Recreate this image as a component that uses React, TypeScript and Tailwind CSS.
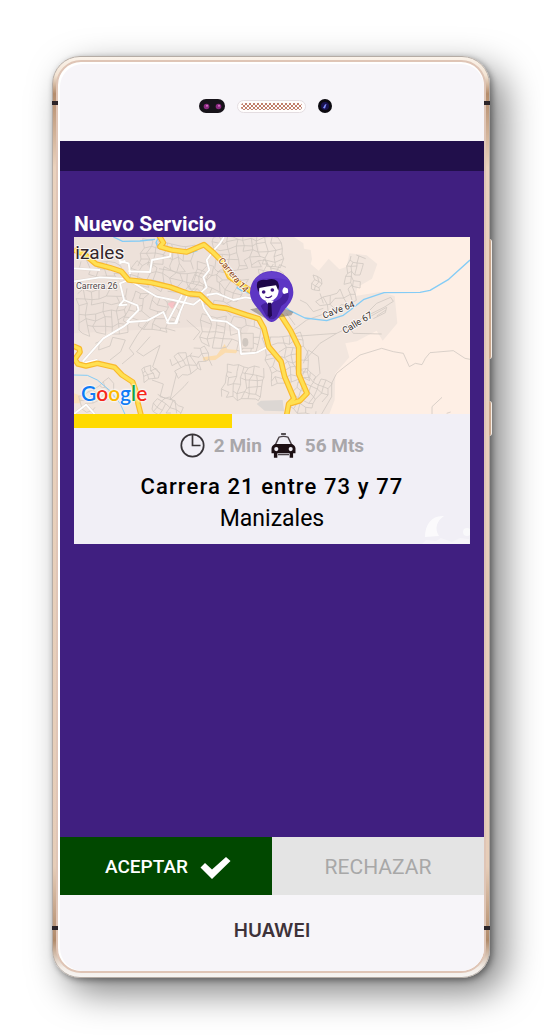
import React from 'react';

type Cluster = { x: number; y: number; cols: number; rows: number; w: number; h: number; angle: number; seed: number };

const CLUSTERS: Cluster[] = [
  { x: 250, y: 120, cols: 7, rows: 4, w: 22, h: 20, angle: 8, seed: 3 },
  { x: 460, y: 112, cols: 9, rows: 6, w: 22, h: 18, angle: -6, seed: 7 },
  { x: 50, y: 275, cols: 6, rows: 6, w: 24, h: 22, angle: -4, seed: 11 },
  { x: 60, y: 180, cols: 5, rows: 2, w: 26, h: 22, angle: 6, seed: 12 },
  { x: 225, y: 185, cols: 9, rows: 3, w: 24, h: 22, angle: 12, seed: 15 },
  { x: 220, y: 270, cols: 7, rows: 5, w: 22, h: 20, angle: 16, seed: 19 },
  { x: 420, y: 180, cols: 7, rows: 5, w: 22, h: 22, angle: 24, seed: 23 },
  { x: 430, y: 345, cols: 8, rows: 4, w: 22, h: 22, angle: 7, seed: 27 },
  { x: 330, y: 475, cols: 7, rows: 3, w: 16, h: 20, angle: -20, seed: 31 },
  { x: 500, y: 490, cols: 7, rows: 5, w: 16, h: 20, angle: 8, seed: 37 },
  { x: 240, y: 505, cols: 3, rows: 3, w: 16, h: 14, angle: -18, seed: 41 },
  { x: 50, y: 590, cols: 6, rows: 3, w: 19, h: 18, angle: -28, seed: 43 },
  { x: 300, y: 580, cols: 5, rows: 3, w: 16, h: 18, angle: 32, seed: 47 },
  { x: 610, y: 420, cols: 6, rows: 7, w: 20, h: 20, angle: -10, seed: 53 },
  { x: 735, y: 510, cols: 5, rows: 6, w: 18, h: 20, angle: 26, seed: 59 },
  { x: 610, y: 175, cols: 4, rows: 3, w: 17, h: 16, angle: 22, seed: 61 },
  { x: 870, y: 165, cols: 3, rows: 5, w: 15, h: 17, angle: 12, seed: 67 },
  { x: 762, y: 230, cols: 2, rows: 3, w: 14, h: 12, angle: 16, seed: 71 },
  { x: 770, y: 300, cols: 6, rows: 2, w: 19, h: 22, angle: -22, seed: 73 },
];

function clusterPath(c: Cluster): string {
  let s = c.seed;
  const rand = () => {
    s = (s * 9301 + 49297) % 233280;
    return s / 233280;
  };
  const a = (c.angle * Math.PI) / 180;
  const pts: number[][][] = [];
  for (let r = 0; r <= c.rows; r++) {
    pts.push([]);
    for (let k = 0; k <= c.cols; k++) {
      const u = k * c.w + (rand() - 0.5) * c.w * 0.7;
      const v = r * c.h + (rand() - 0.5) * c.h * 0.7;
      pts[r].push([Math.round(c.x + u * Math.cos(a) - v * Math.sin(a)), Math.round(c.y + u * Math.sin(a) + v * Math.cos(a))]);
    }
  }
  let d = '';
  for (let r = 0; r <= c.rows; r++) {
    for (let k = 0; k <= c.cols; k++) {
      const p = pts[r][k];
      if (k < c.cols && rand() > 0.15) d += `M${p[0]} ${p[1]}L${pts[r][k + 1][0]} ${pts[r][k + 1][1]}`;
      if (r < c.rows && rand() > 0.15) d += `M${p[0]} ${p[1]}L${pts[r + 1][k][0]} ${pts[r + 1][k][1]}`;
    }
  }
  return d;
}

const HIGHWAYS = [
  'M42 150 L72 162 L108 192 L150 203 L184 214 L206 240 L270 247 L330 261 L385 281 L420 284 L456 319 L500 325 L560 345 L596 356 L612 385 L626 440 L663 484 L674 530 L702 596 L686 612 L680 645',
  'M296 105 L310 128 L300 140 L335 150 L380 156 L432 134 L458 156 L488 186 L508 230 L556 262 L610 300 L665 350 L692 392 L716 442 L716 522 L741 580 L720 602 L690 611',
  'M40 438 L58 446 L60 456 L44 478 L54 492 L78 498 L112 490 L164 502 L186 525 L218 546 L230 580 L234 610 L243 645',
];

const WHITE_ROADS =
  'M42 205 L120 210 M42 244 L120 232 L190 236 M176 182 L206 190 L210 222 M206 240 L180 250 L192 300 L178 316 L202 314 M178 190 L196 182 M206 240 L290 290 L340 300 L400 314 L424 296 M205 214 L270 216 L276 180 L330 170 L332 150 M382 285 L345 370 M366 285 L320 370 M420 285 L432 325 L455 360 L500 365 L536 390 L543 462 L590 458 L625 440 M420 280 L440 262 L430 232 L448 210 L440 180 L462 150 L480 130 L492 112 M440 285 L470 280 L520 300 L556 292 L580 296 M68 485 L130 415 L190 380 L208 366 L262 362 L310 336 L325 370 L350 370 L362 330 M192 300 L232 316 L236 330 L200 366 M60 492 L110 480 L122 492 M42 642 L78 614 L104 642';

const URBAN =
  'M42 111 H702 L730 130 L732 146 L752 150 L756 178 L752 192 L776 212 L806 176 L838 208 L860 200 L868 160 L920 166 L952 192 L936 236 L892 262 L886 288 L960 276 L1004 288 L1012 370 L968 422 L950 392 L890 424 L856 430 L868 472 L826 520 L824 600 L808 642 H42 Z';

function CityMap() {
  return (
    <svg viewBox="42 111 1188 531" className="block h-auto w-full" role="img" aria-label="Mapa de Manizales">
      <rect x="42" y="111" width="1188" height="531" fill="#feefe5" />
      <path d={URBAN} fill="#f2e6de" />
      <path d="M42 111 H590 L620 260 L560 400 L420 380 L42 400 Z" fill="#ede1da" />
      <path d="M322 312 L338 300 L354 312 L336 326 Z" fill="#f8c2c6" />
      <path d="M428 472 L470 466 L494 432 L502 448 L534 450 L528 460 L496 458 L466 480 L430 482 Z" fill="#fbdcae" />
      <path d="M42 580 L70 590 L60 610 L42 610 Z" fill="#fbe0b8" />

      <g fill="none" stroke="#cfc7c0" strokeWidth="2.3">
        {CLUSTERS.map((c) => (
          <path key={c.seed} d={clusterPath(c)} />
        ))}
        <path d="M106 430 L118 425 L116 450 L150 438 L158 412 L196 420 L182 455 L150 480 M262 365 L232 405 L208 445 L222 462 L186 492 M270 410 L230 455 L250 468 L300 436 L278 500 L300 520 M276 540 L310 552 L300 590 L345 602 L350 640 M380 360 L420 395 L400 420 M350 520 L330 600 L372 560 L385 545" />
        <path d="M735 480 L780 430 L830 400 M700 390 L740 360 L840 325 M780 280 L790 310 M720 300 L740 310 L760 335 L790 325 M680 340 L705 375 M690 410 L830 400 L875 378 M860 372 L880 400 L965 402 M730 490 L745 450 L775 470 L780 520 L760 540" />
        <path d="M900 360 L950 310 L992 292 L1000 304 L972 322 L924 346 M930 350 L980 322 L976 338 L940 356 M950 348 L978 330" />
        <path d="M785 642 L815 590 L815 550 L830 520 L852 502 L900 465 L965 445 L1000 455 L1030 460 L1048 500 L1066 490 L1086 494 L1096 475 L1110 458 L1180 452 L1215 475 L1230 478" />
        <path d="M1116 642 L1116 620 L1146 592 M1160 640 L1172 636" />
      </g>
      <path d="M590 612 L602 602 L668 600 L672 634 L614 632 Z" fill="#dcd7d3" />
      <path d="M543 400 H580 V445 H543 Z" fill="#eee2da" stroke="#cfc7c0" strokeWidth="2" />
      <ellipse cx="556" cy="427" rx="9" ry="13" fill="#cfc7c0" />

      <path d={WHITE_ROADS} fill="none" stroke="#dfd5ce" strokeWidth="8" strokeLinejoin="round" />
      <path d={WHITE_ROADS} fill="none" stroke="#ffffff" strokeWidth="5.5" strokeLinejoin="round" />

      <g fill="none" stroke="#84ccf6" strokeWidth="4" strokeLinejoin="round">
        <path d="M160 111 L188 124 L240 123 L285 118 M294 115 L288 128 L295 142 M385 160 L412 152 M530 262 L548 274 L570 280" />
        <path d="M660 310 L690 332 L735 354 L800 362 L850 346 L876 326 L912 298 L972 278 L1080 277 L1110 271 L1166 238 L1230 180" />
        <path d="M42 525 L82 526 L112 540 L150 572 L180 610 L196 645" strokeWidth="3" />
      </g>

      {HIGHWAYS.map((d) => (
        <path key={d} d={d} fill="none" stroke="#f9b92c" strokeWidth="17" strokeLinejoin="round" />
      ))}
      {HIGHWAYS.map((d) => (
        <path key={d} d={d} fill="none" stroke="#ffe052" strokeWidth="10" strokeLinejoin="round" />
      ))}

      <g fontFamily="Roboto, sans-serif" stroke="#ffffff" strokeWidth="6" strokeOpacity="0.75" paintOrder="stroke" strokeLinejoin="round">
        <text x="46" y="178" fontSize="57" fill="#33262a">izales</text>
        <text x="48" y="267" fontSize="27" fill="#54494a">Carrera 26</text>
        <text x="474" y="182" fontSize="27" fill="#8a4318" transform="rotate(51 474 182)">Carrera 14</text>
        <text x="792" y="356" fontSize="27" fill="#3c3431" transform="rotate(-21 792 356)">CaVe 64</text>
        <text x="854" y="402" fontSize="28" fill="#3c3431" transform="rotate(-31 854 402)">Calle 67</text>
      </g>

      <path d="M570 328 L600 322 L635 362 L610 352 Z M635 362 L665 322 L700 336 L694 346 L660 352 Z" fill="#6d6560" opacity="0.5" />
      <path d="M635 366 C622 366 612 350 600 334 C584 314 570 300 570 277 A65 64 0 0 1 700 277 C700 300 686 314 670 334 C658 350 648 366 635 366 Z" fill="#5d36c4" />
      <path d="M580 246 A62 56 0 0 1 690 246 C676 230 594 230 580 246 Z" fill="#6640cc" />
      <path d="M602 318 Q612 306 634 306 Q664 302 670 280 L686 280 Q690 304 664 318 L650 350 Q635 366 620 350 Z" fill="#45219c" />
      <path d="M616 302 L628 318 L642 302 Z" fill="#ffffff" />
      <path d="M624 308 L634 308 L636 346 L629 354 L623 346 Z" fill="#200750" />
      <path d="M597 258 L652 252 Q660 270 652 288 Q642 304 624 304 Q604 302 598 282 Z" fill="#ffffff" />
      <path d="M592 247 Q600 236 620 240 Q640 232 652 244 Q660 256 655 272 L648 256 Q620 260 598 264 L596 276 Q588 262 592 247 Z" fill="#1e0748" />
      <circle cx="611" cy="276" r="5.5" fill="#38107c" />
      <circle cx="637" cy="270" r="5.5" fill="#38107c" />
      <path d="M616 290 Q627 297 636 287" fill="none" stroke="#38107c" strokeWidth="3.5" />
      <path d="M669 266 Q672 258 679 264 Q686 264 684 278 L672 282 Q664 275 669 266 Z" fill="#ffffff" />
    </svg>
  );
}

function PhoneSensors() {
  return (
    <div className="flex items-center justify-center gap-3 pr-[14px]" aria-hidden="true">
      <svg viewBox="0 0 26 14" className="h-[14px] w-[26px]">
        <rect width="26" height="14" rx="7" fill="#17131a" />
        <circle cx="7.5" cy="7.5" r="2.8" fill="#8a2a80" />
        <circle cx="19.5" cy="7.5" r="2.8" fill="#8a2a80" />
        <circle cx="8" cy="6.7" r="1" fill="#d878c8" />
        <circle cx="20" cy="6.7" r="1" fill="#d878c8" />
      </svg>
      <svg viewBox="0 0 69 13" className="h-[13px] w-[69px]">
        <defs>
          <pattern id="grille" x="4" y="3" width="4" height="4" patternUnits="userSpaceOnUse">
            <circle cx="1" cy="1" r="0.95" fill="#a5482c" />
            <circle cx="3" cy="3" r="0.95" fill="#a5482c" />
          </pattern>
        </defs>
        <rect x="0.5" y="0.5" width="68" height="12" rx="6" fill="#fffdfd" stroke="#e4dde1" />
        <rect x="4" y="3" width="61" height="7" rx="3" fill="url(#grille)" />
      </svg>
      <svg viewBox="0 0 14 14" className="size-[14px]">
        <circle cx="7" cy="7" r="7" fill="#0c0a10" />
        <circle cx="7" cy="7" r="4" fill="#19124e" />
        <path d="M5 9 L7 5.5 L8.5 5 L7 9.5 Z" fill="#8090ff" />
      </svg>
    </div>
  );
}

function ClockIcon() {
  return (
    <svg viewBox="0 0 25 25" className="size-[25px]" fill="none" stroke="#383438" aria-hidden="true">
      <circle cx="12.5" cy="12.5" r="11.2" strokeWidth="1.7" />
      <path d="M12.5 2 V12.5 H20.5" strokeWidth="1.7" />
    </svg>
  );
}

function TaxiIcon() {
  return (
    <svg viewBox="632 81 72 73" className="size-[25px]" aria-hidden="true">
      <path d="M661 81 H675 V87 H661 Z" fill="#555054" />
      <path d="M643 118 L655 93 Q668 89 681 93 L693 118" fill="none" stroke="#4b4348" strokeWidth="4" strokeLinejoin="round" />
      <path d="M643 113 H693 Q703 118 703 126 V140 H633 V126 Q633 118 643 113 Z" fill="#1d1014" />
      <circle cx="647" cy="128" r="6" fill="#f1eff6" />
      <circle cx="689" cy="128" r="6" fill="#f1eff6" />
      <path d="M640 139 H650 V153 H640 Z M686 139 H696 V153 H686 Z" fill="#1d1014" />
      <path d="M652 144 H684" stroke="#4b4348" strokeWidth="4" />
    </svg>
  );
}

function FrameSeams() {
  return (
    <>
      <span className="absolute top-[44px] -left-px h-1 w-[6px] bg-[#2c2529]" />
      <span className="absolute top-[44px] -right-px h-1 w-[6px] bg-[#2c2529]" />
      <span className="absolute bottom-[47px] -left-px h-1 w-[6px] bg-[#2c2529]" />
      <span className="absolute -right-px bottom-[47px] h-1 w-[6px] bg-[#2c2529]" />
      <span className="absolute top-[182px] -right-[3px] h-[120px] w-[3px] rounded-r-sm border-r border-[#f5efe9] bg-[#c9a68b]" />
      <span className="absolute top-[344px] -right-[3px] h-[35px] w-[3px] rounded-r-sm border-r border-[#f5efe9] bg-[#c9a68b]" />
    </>
  );
}

export default function App() {
  return (
    <div className="flex min-h-screen flex-col bg-white pt-14 pr-[54px] pb-[57px] pl-[52px] font-[Roboto,sans-serif]">
      <div className="relative flex flex-1 flex-col rounded-[28px] border border-[#b5aca5] bg-[linear-gradient(180deg,#fbf3ea_0%,#f3e4d4_2%,#b48c6c_4%,#ead2bd_12%,#e6cdb8_88%,#b08a6a_96%,#f4eee9_99%,#f6f4f2_100%)] pt-[3px] pr-[3px] pb-[4px] pl-[3px] shadow-[2px_2px_6px_rgba(0,0,0,0.4),14px_14px_36px_rgba(0,0,0,0.5)]">
        <FrameSeams />
        <div className="flex flex-1 flex-col rounded-[25px] border-2 border-[#dfc5b6] bg-white pt-[2px] pl-[2px]">
          <div className="flex flex-1 flex-col rounded-[23px] bg-[#f7f5f9]">
            <div className="flex h-[77px] flex-col justify-center pt-[7px]">
              <PhoneSensors />
            </div>

            <main className="flex flex-1 flex-col bg-[#401f80]">
              <div className="h-[30px] bg-[#210f4b]" />
              <div className="flex-1 px-[14px] pt-10">
                <h1 className="text-[21px] leading-[26px] font-bold text-white">Nuevo Servicio</h1>
                <article className="relative bg-[#f1eff6] pb-[9px]">
                  <div className="relative">
                    <CityMap />
                    <a
                      href="#google"
                      className="absolute bottom-2 left-[7px] font-[Lato,sans-serif] text-[21px] leading-[26px] font-semibold text-[#0f7cf5] [text-shadow:0_0_2px_#fff,0_0_2px_#fff,0_0_3px_#fff]"
                    >
                      G<span className="text-[#f5281c]">o</span>
                      <span className="text-[#fbb800]">o</span>g<span className="text-[#12a346]">l</span>
                      <span className="text-[#f5281c]">e</span>
                    </a>
                  </div>
                  <div className="h-[14px]">
                    <div className="h-full w-2/5 bg-[#ffda00]" />
                  </div>
                  <div className="flex h-[34px] items-center justify-center gap-[9px] text-[19px] font-bold text-[#a9a7aa]">
                    <ClockIcon />
                    <span className="pt-[2px]">2 Min</span>
                    <TaxiIcon />
                    <span className="pt-[2px]">56 Mts</span>
                  </div>
                  <p className="pt-[9px] text-center text-[22px] leading-8 font-medium tracking-wider text-black">Carrera 21 entre 73 y 77</p>
                  <p className="text-center text-[23px] leading-8 text-black">Manizales</p>
                  <svg viewBox="0 0 48 34" className="absolute right-0 bottom-0 h-[34px] w-12" fill="#ffffff" aria-hidden="true">
                    <path d="M3 27 C3 14 10 5 22 6 C15 11 12 18 17 26 Z" opacity="0.7" />
                    <path d="M0 34 L4 30 L14 31 L19 28 L30 32 L38 28 L47 29 V34 Z" opacity="0.35" />
                    <circle cx="45" cy="22" r="4" opacity="0.6" />
                  </svg>
                </article>
              </div>
              <div className="grid h-[58px] grid-cols-2">
                <button type="button" className="flex items-center justify-center gap-3 bg-[#014800] pt-[3px] pl-1 text-[19px] font-medium text-white">
                  ACEPTAR
                  <svg viewBox="0 0 31 24" className="h-6 w-[31px]" fill="#ffffff" aria-hidden="true">
                    <path d="M0.5 11.5 L5 7 L12 13.5 L26 1 L30.5 5 L12 23 Z" />
                  </svg>
                </button>
                <button type="button" className="bg-[#e4e4e4] pt-[3px] text-[21px] text-[#a8a8a8]">
                  RECHAZAR
                </button>
              </div>
            </main>

            <div className="flex h-[76px] items-center justify-center pb-1 font-[Inter,sans-serif] text-[19px] font-semibold text-[#3e3239]">HUAWEI</div>
          </div>
        </div>
      </div>
    </div>
  );
}
